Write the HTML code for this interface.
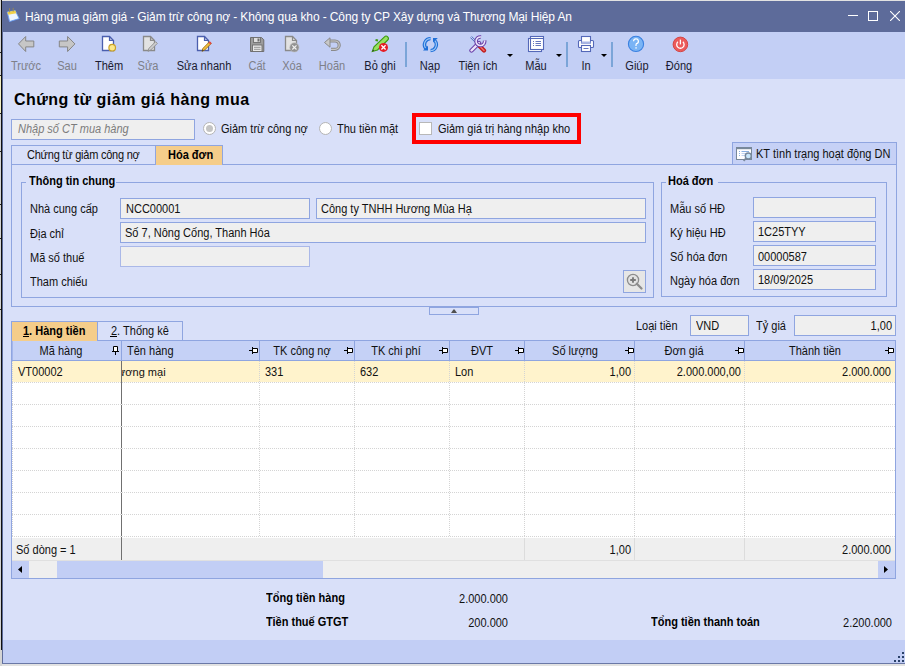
<!DOCTYPE html>
<html><head><meta charset="utf-8">
<style>
*{box-sizing:border-box;margin:0;padding:0}
html,body{width:905px;height:666px;overflow:hidden;background:#e2e2e2;font-family:"Liberation Sans",sans-serif;font-size:11px;color:#111}
.a{position:absolute}
.t{position:absolute;white-space:nowrap}
</style></head><body>

<div class="a" style="left:0px;top:0px;width:2px;height:666px;background:#d4d4d4;"></div>
<div class="a" style="left:1px;top:0px;width:1px;height:650px;background:#111;"></div>
<div class="a" style="left:0px;top:75px;width:1px;height:38px;background:#f4f0c4;"></div>
<div class="a" style="left:0px;top:52px;width:1px;height:1px;background:#222;"></div>
<div class="a" style="left:0px;top:75px;width:1px;height:1px;background:#222;"></div>
<div class="a" style="left:0px;top:113px;width:1px;height:1px;background:#222;"></div>
<div class="a" style="left:0px;top:151px;width:1px;height:1px;background:#222;"></div>
<div class="a" style="left:0px;top:204px;width:1px;height:1px;background:#222;"></div>
<div class="a" style="left:0px;top:238px;width:1px;height:1px;background:#222;"></div>
<div class="a" style="left:0px;top:274px;width:1px;height:1px;background:#222;"></div>
<div class="a" style="left:0px;top:309px;width:1px;height:1px;background:#222;"></div>
<div class="a" style="left:2px;top:1px;width:903px;height:663px;background:#d9e0f9;"></div>
<div class="a" style="left:2px;top:1px;width:903px;height:31px;background:#5d6b9a;"></div>
<div class="a" style="left:2px;top:32px;width:1px;height:632px;background:#5d6b9a;"></div>
<div class="a" style="left:3px;top:32px;width:902px;height:47px;background:#c3cff5;"></div>
<div class="a" style="left:3px;top:640px;width:902px;height:23px;background:#c2cef5;"></div>
<div class="a" style="left:2px;top:663px;width:903px;height:1px;background:#6a78a6;"></div>
<svg class="a" style="left:4px;top:6px;" width="18" height="18" viewBox="0 0 18 18"><path d="M2.6 6 L11 4.6 L15.5 13 L5 16 Z" fill="#7c6ff0" opacity="0.55"/><path d="M3.3 5.9 L11.2 4.6 L15.2 12.6 L5.6 15.5 Z" fill="#eef6ff" stroke="#62a0f0" stroke-width="0.8"/><path d="M3.3 5.9 L11.2 4.6 L12.4 7.2 L4.2 8.8 Z" fill="#f2d24a"/><path d="M5.6 2.2 V6.4 M9.2 1.8 V5.6" stroke="#9a8a50" stroke-width="0.9"/></svg>
<div class="t" style="top:10px;font-size:12px;line-height:14px;color:#ffffff;letter-spacing:-0.12px;left:25px;">Hàng mua giảm giá - Giảm trừ công nợ - Không qua kho - Công ty CP Xây dựng và Thương Mại Hiệp An</div>
<div class="a" style="left:848px;top:15px;width:10px;height:1px;background:#fff;"></div>
<div class="a" style="left:868px;top:11px;width:10px;height:10px;border:1px solid #fff;"></div>
<svg class="a" style="left:890px;top:11px;" width="10" height="10" viewBox="0 0 10 10"><path d="M0 0 L10 10 M10 0 L0 10" stroke="#fff" stroke-width="1.1"/></svg>
<div class="t" style="top:59px;font-size:12px;line-height:14px;color:#7e8088;left:-14.5px;width:80px;text-align:center;transform:scaleX(0.92);transform-origin:50% 0;">Trước</div>
<div class="t" style="top:59px;font-size:12px;line-height:14px;color:#7e8088;left:27.0px;width:80px;text-align:center;transform:scaleX(0.92);transform-origin:50% 0;">Sau</div>
<div class="t" style="top:59px;font-size:12px;line-height:14px;color:#1b1b30;left:68.5px;width:80px;text-align:center;transform:scaleX(0.92);transform-origin:50% 0;">Thêm</div>
<div class="t" style="top:59px;font-size:12px;line-height:14px;color:#7e8088;left:108.0px;width:80px;text-align:center;transform:scaleX(0.92);transform-origin:50% 0;">Sửa</div>
<div class="t" style="top:59px;font-size:12px;line-height:14px;color:#1b1b30;left:163.7px;width:80px;text-align:center;transform:scaleX(0.92);transform-origin:50% 0;">Sửa nhanh</div>
<div class="t" style="top:59px;font-size:12px;line-height:14px;color:#7e8088;left:216.5px;width:80px;text-align:center;transform:scaleX(0.92);transform-origin:50% 0;">Cất</div>
<div class="t" style="top:59px;font-size:12px;line-height:14px;color:#7e8088;left:252.0px;width:80px;text-align:center;transform:scaleX(0.92);transform-origin:50% 0;">Xóa</div>
<div class="t" style="top:59px;font-size:12px;line-height:14px;color:#7e8088;left:292.3px;width:80px;text-align:center;transform:scaleX(0.92);transform-origin:50% 0;">Hoãn</div>
<div class="t" style="top:59px;font-size:12px;line-height:14px;color:#1b1b30;left:340.0px;width:80px;text-align:center;transform:scaleX(0.92);transform-origin:50% 0;">Bỏ ghi</div>
<div class="t" style="top:59px;font-size:12px;line-height:14px;color:#1b1b30;left:390.3px;width:80px;text-align:center;transform:scaleX(0.92);transform-origin:50% 0;">Nạp</div>
<div class="t" style="top:59px;font-size:12px;line-height:14px;color:#1b1b30;left:438.3px;width:80px;text-align:center;transform:scaleX(0.92);transform-origin:50% 0;">Tiện ích</div>
<div class="t" style="top:59px;font-size:12px;line-height:14px;color:#1b1b30;left:496.0px;width:80px;text-align:center;transform:scaleX(0.92);transform-origin:50% 0;">Mẫu</div>
<div class="t" style="top:59px;font-size:12px;line-height:14px;color:#1b1b30;left:545.8px;width:80px;text-align:center;transform:scaleX(0.92);transform-origin:50% 0;">In</div>
<div class="t" style="top:59px;font-size:12px;line-height:14px;color:#1b1b30;left:596.5px;width:80px;text-align:center;transform:scaleX(0.92);transform-origin:50% 0;">Giúp</div>
<div class="t" style="top:59px;font-size:12px;line-height:14px;color:#1b1b30;left:639.3px;width:80px;text-align:center;transform:scaleX(0.92);transform-origin:50% 0;">Đóng</div>
<div class="a" style="left:405px;top:42px;width:2px;height:25px;background:#7ba5d8;"></div>
<div class="a" style="left:566px;top:42px;width:2px;height:25px;background:#7ba5d8;"></div>
<div class="a" style="left:611px;top:42px;width:2px;height:25px;background:#7ba5d8;"></div>
<svg class="a" style="left:507px;top:54px;" width="6" height="3" viewBox="0 0 6 3"><path d="M0 0 L6 0 L3 3 Z" fill="#000"/></svg>
<svg class="a" style="left:556px;top:54px;" width="6" height="3" viewBox="0 0 6 3"><path d="M0 0 L6 0 L3 3 Z" fill="#000"/></svg>
<svg class="a" style="left:601px;top:54px;" width="6" height="3" viewBox="0 0 6 3"><path d="M0 0 L6 0 L3 3 Z" fill="#000"/></svg>
<svg class="a" style="left:17px;top:35px;" width="18" height="18" viewBox="0 0 18 18"><path d="M1.5 8.9 L8.7 1.5 V6 H16.8 V11.9 H8.7 V16.5 Z" fill="#c6c6c6" stroke="#858585" stroke-width="1" stroke-linejoin="miter"/></svg>
<svg class="a" style="left:58px;top:35px;" width="18" height="18" viewBox="0 0 18 18"><path d="M16.9 8.9 L9.6 1.5 V6 H1.3 V11.9 H9.6 V16.5 Z" fill="#c6c6c6" stroke="#858585" stroke-width="1" stroke-linejoin="miter"/></svg>
<svg class="a" style="left:100px;top:35px;" width="17" height="17" viewBox="0 0 17 17"><path d="M2.5 1.5 H9.5 L13.5 5.5 V15.5 H2.5 Z" fill="#fff" stroke="#4b5fae" stroke-width="1.3" stroke-linejoin="miter"/><path d="M9.5 1.5 V5.5 H13.5 Z" fill="#4b5fae" opacity="0.35"/><path d="M9.5 1.5 V5.5 H13.5" fill="none" stroke="#4b5fae" stroke-width="1.2"/><circle cx="12.2" cy="12.7" r="3.3" fill="#fbe88a" stroke="#c8a028" stroke-width="1.2"/></svg>
<svg class="a" style="left:141px;top:35px;" width="18" height="17" viewBox="0 0 18 17"><path d="M2.5 1.5 H9.5 L13.5 5.5 V15.5 H2.5 Z" fill="#e2e2e2" stroke="#8a8a8a" stroke-width="1.3" stroke-linejoin="miter"/><path d="M9.5 1.5 V5.5 H13.5 Z" fill="#8a8a8a" opacity="0.35"/><path d="M9.5 1.5 V5.5 H13.5" fill="none" stroke="#8a8a8a" stroke-width="1.2"/><path d="M7 16.3 L8 13.3 L14.6 6.7 L16.3 8.4 L9.7 15 Z" fill="#cfcfcf" stroke="#8a8a8a" stroke-width="0.9"/></svg>
<svg class="a" style="left:195px;top:35px;" width="18" height="17" viewBox="0 0 18 17"><path d="M2.5 1.5 H9.5 L13.5 5.5 V15.5 H2.5 Z" fill="#fff" stroke="#4b5fae" stroke-width="1.3" stroke-linejoin="miter"/><path d="M9.5 1.5 V5.5 H13.5 Z" fill="#4b5fae" opacity="0.35"/><path d="M9.5 1.5 V5.5 H13.5" fill="none" stroke="#4b5fae" stroke-width="1.2"/><path d="M7 16.3 L8 13.3 L14.6 6.7 L16.3 8.4 L9.7 15 Z" fill="#f2c040" stroke="#a07010" stroke-width="0.9"/><path d="M13.6 7.7 L15.3 9.4 L16.6 8.1 L14.9 6.4 Z" fill="#e8404a"/><path d="M7 16.3 L7.6 14.6 L8.7 15.7 Z" fill="#333"/></svg>
<svg class="a" style="left:249px;top:36px;" width="16" height="17" viewBox="0 0 16 17"><path d="M1.5 1.5 H12.5 L14.8 3.8 V15.5 H1.5 Z" fill="#9c9c9c" stroke="#6e6e6e" stroke-width="1"/><rect x="4.5" y="1.5" width="7" height="5" fill="#dedede" stroke="#6e6e6e" stroke-width="0.9"/><rect x="8.5" y="2.5" width="2" height="3" fill="#6e6e6e"/><rect x="3.5" y="9" width="9.5" height="6.5" fill="#e8e8e8" stroke="#6e6e6e" stroke-width="0.9"/><path d="M5 11.3 H11.5 M5 13.3 H11.5" stroke="#8a8a8a" stroke-width="0.9"/></svg>
<svg class="a" style="left:283px;top:35px;" width="18" height="18" viewBox="0 0 18 18"><path d="M2.5 1.5 H9.5 L13.5 5.5 V15.5 H2.5 Z" fill="#e2e2e2" stroke="#8a8a8a" stroke-width="1.3"/><path d="M9.5 1.5 V5.5 H13.5" fill="none" stroke="#8a8a8a" stroke-width="1.2"/><circle cx="11.4" cy="12.4" r="4.6" fill="#929292" stroke="#bdbdbd" stroke-width="0.6"/><path d="M9.3 10.3 L13.5 14.5 M13.5 10.3 L9.3 14.5" stroke="#f0f0f0" stroke-width="1.2"/></svg>
<svg class="a" style="left:323px;top:37px;" width="18" height="15" viewBox="0 0 18 15"><path d="M6 4 H12 A4.2 4.2 0 0 1 12 12.4 H8" fill="none" stroke="#8a8a8a" stroke-width="3.2"/><path d="M6 4 H12 A4.2 4.2 0 0 1 12 12.4 H8" fill="none" stroke="#c8c8c8" stroke-width="1.2"/><path d="M1.5 5.5 L7 0.8 V10.2 Z" fill="#c8c8c8" stroke="#8a8a8a" stroke-width="1" stroke-linejoin="miter"/></svg>
<svg class="a" style="left:369px;top:33px;" width="22" height="22" viewBox="0 0 22 22"><path d="M3.3 18.5 L5 13.8 L15.5 3.8 A2.3 2.3 0 0 1 18.8 7 L8.5 17 Z" fill="#98e060" stroke="#3c9a10" stroke-width="1.1"/><path d="M9 7.5 L6.5 7" stroke="#3c9a10" stroke-width="2"/><path d="M3.3 18.5 L4 16.6 L5.2 17.8 Z" fill="#333"/><circle cx="14.5" cy="14.4" r="4.5" fill="#e61c24"/><path d="M12.4 12.3 L16.6 16.5 M16.6 12.3 L12.4 16.5" stroke="#fff" stroke-width="1.3"/></svg>
<svg class="a" style="left:421px;top:36px;" width="18" height="17" viewBox="0 0 18 17"><path d="M9.6 2.6 A6 6 0 0 0 5 12.6" fill="none" stroke="#1f6fd8" stroke-width="3.4"/><path d="M13.8 4.6 A6 6 0 0 1 9.6 14.6" fill="none" stroke="#1f6fd8" stroke-width="3.4"/><path d="M9.6 2.6 A6 6 0 0 0 5 12.6" fill="none" stroke="#9cc6f6" stroke-width="1.2"/><path d="M13.8 4.6 A6 6 0 0 1 9.6 14.6" fill="none" stroke="#9cc6f6" stroke-width="1.2"/><path d="M2 14.6 L7 14.6 L7 9.8 Z" fill="#1f6fd8"/><path d="M12 2 L16.8 2 L12 6.6 Z" fill="#1f6fd8"/></svg>
<svg class="a" style="left:469px;top:35px;" width="18" height="18" viewBox="0 0 18 18"><path d="M2 2 L7.5 7.5" stroke="#5070c0" stroke-width="2.2"/><path d="M2 2 L7.5 7.5" stroke="#e6ecff" stroke-width="0.8"/><path d="M10.5 11 L15 15.5" stroke="#c01c1c" stroke-width="4.2" stroke-linecap="round"/><path d="M10.5 11 L15 15.5" stroke="#f06a6a" stroke-width="1.6" stroke-linecap="round"/><path d="M2.5 15.5 L10 8" stroke="#6a40a8" stroke-width="4.4" stroke-linecap="round"/><path d="M2.5 15.5 L10 8" stroke="#ece4fa" stroke-width="2.4" stroke-linecap="round"/><path d="M15.6 5.5 A4.3 4.3 0 1 1 12 2" fill="none" stroke="#6a40a8" stroke-width="3.6"/><path d="M15.6 5.5 A4.3 4.3 0 1 1 12 2" fill="none" stroke="#ece4fa" stroke-width="1.6"/></svg>
<svg class="a" style="left:527px;top:35px;" width="18" height="18" viewBox="0 0 18 18"><rect x="1.5" y="3.5" width="13" height="13" fill="#fff" stroke="#5468b8" stroke-width="1.1"/><rect x="3.5" y="1.5" width="13" height="13" fill="#fff" stroke="#5468b8" stroke-width="1.1"/><path d="M3.5 3.5 H16.5" stroke="#5468b8" stroke-width="1"/><path d="M6 6.5 H7 M6 8.5 H7 M6 10.5 H7 M8.5 6.5 H14 M8.5 8.5 H14 M8.5 10.5 H14" stroke="#5468b8" stroke-width="0.9"/></svg>
<svg class="a" style="left:577px;top:35px;" width="18" height="18" viewBox="0 0 18 18"><rect x="1.5" y="5.5" width="15" height="7" rx="1" fill="#fff" stroke="#5468b8" stroke-width="1.1"/><rect x="4.5" y="1.5" width="9" height="6.5" fill="#fff" stroke="#5468b8" stroke-width="1.1"/><rect x="4.5" y="6.5" width="9" height="2" fill="#a9b6e4"/><rect x="4.5" y="10.5" width="9" height="6" fill="#fff" stroke="#5468b8" stroke-width="1.1"/><path d="M6.5 13.5 H11.5" stroke="#5468b8" stroke-width="0.9"/></svg>
<svg class="a" style="left:627px;top:35px;" width="18" height="18" viewBox="0 0 18 18"><circle cx="9" cy="8.9" r="7.6" fill="#7ab4f5" stroke="#3a80e0" stroke-width="1.1"/><path d="M6.6 6.3 A2.4 2.4 0 1 1 9.6 8.6 Q9 9 9 10.2 V11" fill="none" stroke="#fff" stroke-width="1.2"/><rect x="8.4" y="12.2" width="1.3" height="1.4" fill="#fff"/></svg>
<svg class="a" style="left:672px;top:36px;" width="17" height="17" viewBox="0 0 17 17"><circle cx="8.4" cy="8.4" r="7.3" fill="#ec5a5a" stroke="#d24646" stroke-width="1"/><path d="M5.9 5.8 A3.7 3.7 0 1 0 10.9 5.8" fill="none" stroke="#fff" stroke-width="1.3"/><path d="M8.4 3.6 V8.4" stroke="#fff" stroke-width="1.3"/></svg>
<div class="t" style="top:91px;font-size:16px;line-height:18px;font-weight:700;color:#000;letter-spacing:0.48px;left:14px;">Chứng từ giảm giá hàng mua</div>
<div class="a" style="left:11px;top:119px;width:184px;height:21px;background:#efefef;border:1px solid #8fa5e0;"></div>
<div class="t" style="top:123px;font-size:12px;line-height:13px;transform:scaleX(0.917);transform-origin:0 0;color:#7c7c7c;left:18px;font-style:italic;">Nhập số CT mua hàng</div>
<svg class="a" style="left:203px;top:122px;" width="13" height="13" viewBox="0 0 13 13"><circle cx="6.5" cy="6.5" r="6" fill="#fff" stroke="#b4b4b4" stroke-width="1"/><circle cx="6.5" cy="6.5" r="3.5" fill="#c4c4c4"/></svg>
<div class="t" style="top:123px;font-size:12px;line-height:13px;transform:scaleX(0.917);transform-origin:0 0;left:221px;">Giảm trừ công nợ</div>
<svg class="a" style="left:319px;top:122px;" width="13" height="13" viewBox="0 0 13 13"><circle cx="6.5" cy="6.5" r="6" fill="#fff" stroke="#b4b4b4" stroke-width="1"/></svg>
<div class="t" style="top:123px;font-size:12px;line-height:13px;transform:scaleX(0.917);transform-origin:0 0;left:337px;">Thu tiền mặt</div>
<div class="a" style="left:412px;top:113px;width:169px;height:31px;border:4px solid #ff0000;"></div>
<div class="a" style="left:419px;top:122px;width:13px;height:13px;background:#fff;border:1px solid #b8b8b8;"></div>
<div class="t" style="top:123px;font-size:12px;line-height:13px;transform:scaleX(0.917);transform-origin:0 0;left:438px;">Giảm giá trị hàng nhập kho</div>
<div class="a" style="left:732px;top:142px;width:165px;height:23px;background:#c6d1f6;border:1px solid #8fa5e0;"></div>
<svg class="a" style="left:735px;top:146px;" width="18" height="17" viewBox="0 0 18 17"><rect x="1.5" y="1.5" width="15" height="12" fill="#fff" stroke="#78889a" stroke-width="1"/><rect x="1" y="1" width="16" height="2.2" fill="#78889a"/><path d="M4.5 5 V11" stroke="#8ab0e0" stroke-width="1" stroke-dasharray="1 1"/><path d="M6.5 5.5 H14" stroke="#8ab0e0" stroke-width="1"/><path d="M6.5 7.5 H11 M6.5 9.5 H10" stroke="#c0d4f0" stroke-width="1"/><circle cx="13.3" cy="10" r="3" fill="#c8e6fa" stroke="#78889a" stroke-width="1.4"/><path d="M11.2 12.2 L8.6 14.8" stroke="#78889a" stroke-width="1.8"/></svg>
<div class="t" style="top:148px;font-size:12px;line-height:13px;transform:scaleX(0.917);transform-origin:0 0;left:756px;">KT tình trạng hoạt động DN</div>
<div class="a" style="left:11px;top:164px;width:886px;height:143px;border:1px solid #8fa5e0;"></div>
<div class="a" style="left:11px;top:145px;width:145px;height:20px;border:1px solid #8fa5e0;"></div>
<div class="a" style="left:155px;top:145px;width:68px;height:20px;background:#f5cd8a;border:1px solid #8fa5e0;border-bottom:none;"></div>
<div class="t" style="top:149px;font-size:12px;line-height:13px;transform:scaleX(0.917);transform-origin:0 0;letter-spacing:-0.25px;left:27px;">Chứng từ giảm công nợ</div>
<div class="t" style="top:149px;font-size:12px;line-height:13px;transform:scaleX(0.917);transform-origin:0 0;font-weight:700;color:#000;left:167.5px;">Hóa đơn</div>
<div class="a" style="left:21px;top:182px;width:633px;height:116px;border:1px solid #8fa5e0;"></div>
<div class="a" style="left:26px;top:176px;width:90px;height:10px;background:#d9e0f9;"></div>
<div class="t" style="top:175px;font-size:12px;line-height:13px;transform:scaleX(0.917);transform-origin:0 0;font-weight:700;color:#000;left:28.5px;">Thông tin chung</div>
<div class="t" style="top:203px;font-size:12px;line-height:13px;transform:scaleX(0.917);transform-origin:0 0;left:30px;">Nhà cung cấp</div>
<div class="t" style="top:228px;font-size:12px;line-height:13px;transform:scaleX(0.917);transform-origin:0 0;left:30px;">Địa chỉ</div>
<div class="t" style="top:252px;font-size:12px;line-height:13px;transform:scaleX(0.917);transform-origin:0 0;left:30px;">Mã số thuế</div>
<div class="t" style="top:276px;font-size:12px;line-height:13px;transform:scaleX(0.917);transform-origin:0 0;left:30px;">Tham chiếu</div>
<div class="a" style="left:120px;top:198px;width:190px;height:21px;background:#efefef;border:1px solid #8fa5e0;"></div>
<div class="a" style="left:316px;top:198px;width:330px;height:21px;background:#efefef;border:1px solid #8fa5e0;"></div>
<div class="a" style="left:120px;top:222px;width:526px;height:21px;background:#efefef;border:1px solid #8fa5e0;"></div>
<div class="a" style="left:120px;top:246px;width:190px;height:21px;background:#efefef;border:1px solid #aab8e8;"></div>
<div class="t" style="top:203px;font-size:12px;line-height:13px;transform:scaleX(0.917);transform-origin:0 0;left:126px;">NCC00001</div>
<div class="t" style="top:203px;font-size:12px;line-height:13px;transform:scaleX(0.917);transform-origin:0 0;left:321px;">Công ty TNHH Hương Mùa Hạ</div>
<div class="t" style="top:227px;font-size:12px;line-height:13px;transform:scaleX(0.917);transform-origin:0 0;left:125px;">Số 7, Nông Cống, Thanh Hóa</div>
<div class="a" style="left:623px;top:270px;width:23px;height:23px;background:#e6e6e6;border:1px solid #8fa5e0;"></div>
<svg class="a" style="left:626px;top:273px;" width="18" height="18" viewBox="0 0 18 18"><circle cx="7" cy="7" r="5.6" fill="#e2e2e2" stroke="#8c8c8c" stroke-width="1.3"/><path d="M4.2 7 H9.8 M7 4.2 V9.8" stroke="#7a7a7a" stroke-width="1.9"/><path d="M10.8 10.8 L15.5 15.5" stroke="#8c8c8c" stroke-width="2.3" stroke-linecap="round"/></svg>
<div class="a" style="left:661px;top:182px;width:226px;height:115px;border:1px solid #8fa5e0;"></div>
<div class="a" style="left:666px;top:176px;width:52px;height:10px;background:#d9e0f9;"></div>
<div class="t" style="top:175px;font-size:12px;line-height:13px;transform:scaleX(0.917);transform-origin:0 0;font-weight:700;color:#000;left:668px;">Hoá đơn</div>
<div class="t" style="top:203px;font-size:12px;line-height:13px;transform:scaleX(0.917);transform-origin:0 0;left:670px;">Mẫu số HĐ</div>
<div class="t" style="top:227px;font-size:12px;line-height:13px;transform:scaleX(0.917);transform-origin:0 0;left:670px;">Ký hiệu HĐ</div>
<div class="t" style="top:251px;font-size:12px;line-height:13px;transform:scaleX(0.917);transform-origin:0 0;left:670px;">Số hóa đơn</div>
<div class="t" style="top:275px;font-size:12px;line-height:13px;transform:scaleX(0.917);transform-origin:0 0;left:670px;">Ngày hóa đơn</div>
<div class="a" style="left:753px;top:197px;width:123px;height:21px;background:#efefef;border:1px solid #8fa5e0;"></div>
<div class="a" style="left:753px;top:221px;width:123px;height:21px;background:#efefef;border:1px solid #8fa5e0;"></div>
<div class="a" style="left:753px;top:245px;width:123px;height:21px;background:#efefef;border:1px solid #8fa5e0;"></div>
<div class="a" style="left:753px;top:269px;width:123px;height:21px;background:#efefef;border:1px solid #8fa5e0;"></div>
<div class="t" style="top:226px;font-size:12px;line-height:13px;transform:scaleX(0.917);transform-origin:0 0;left:758px;">1C25TYY</div>
<div class="t" style="top:251px;font-size:12px;line-height:13px;transform:scaleX(0.917);transform-origin:0 0;left:758px;">00000587</div>
<div class="t" style="top:274px;font-size:12px;line-height:13px;transform:scaleX(0.917);transform-origin:0 0;left:758px;">18/09/2025</div>
<div class="a" style="left:429px;top:306px;width:50px;height:9px;border:1px solid #8fa5e0;"></div>
<div class="a" style="left:429px;top:307px;width:50px;height:1px;background:#8fa5e0;"></div>
<svg class="a" style="left:451px;top:309px;" width="6" height="4" viewBox="0 0 6 4"><path d="M0 4 L6 4 L3.6 0.6 L2.4 0.6 Z" fill="#505050"/></svg>
<div class="t" style="top:320px;font-size:12px;line-height:13px;transform:scaleX(0.917);transform-origin:0 0;left:636px;">Loại tiền</div>
<div class="a" style="left:690px;top:315px;width:59px;height:21px;background:#efefef;border:1px solid #8fa5e0;"></div>
<div class="t" style="top:320px;font-size:12px;line-height:13px;transform:scaleX(0.917);transform-origin:0 0;left:696px;">VND</div>
<div class="t" style="top:320px;font-size:12px;line-height:13px;transform:scaleX(0.917);transform-origin:0 0;left:756px;">Tỷ giá</div>
<div class="a" style="left:794px;top:315px;width:102px;height:21px;background:#efefef;border:1px solid #8fa5e0;"></div>
<div class="t" style="top:320px;font-size:12px;line-height:13px;transform:scaleX(0.917);transform-origin:100% 0;left:592px;width:300px;text-align:right;">1,00</div>
<div class="a" style="left:11px;top:340px;width:885px;height:239px;background:#fff;border:1px solid #8fa5e0;"></div>
<div class="a" style="left:12px;top:341px;width:883px;height:19px;background:#c5d1f6;"></div>
<div class="a" style="left:97px;top:321px;width:86px;height:20px;border:1px solid #8fa5e0;"></div>
<div class="a" style="left:11px;top:321px;width:87px;height:20px;background:#f5cd8a;border:1px solid #8fa5e0;border-bottom:none;"></div>
<div class="t" style="top:325px;font-size:12px;line-height:13px;transform:scaleX(0.917);transform-origin:0 0;font-weight:700;color:#000;left:23px;">1. Hàng tiền</div>
<div class="a" style="left:23px;top:336px;width:6px;height:1px;background:#000;"></div>
<div class="t" style="top:325px;font-size:12px;line-height:13px;transform:scaleX(0.917);transform-origin:0 0;left:110.5px;">2. Thống kê</div>
<div class="a" style="left:110px;top:336px;width:7px;height:1px;background:#000;"></div>
<div class="a" style="left:12px;top:360px;width:883px;height:1px;background:#8fa5e0;"></div>
<div class="a" style="left:121px;top:341px;width:1px;height:19px;background:#8fa5e0;"></div>
<div class="a" style="left:259px;top:341px;width:1px;height:19px;background:#8fa5e0;"></div>
<div class="a" style="left:354px;top:341px;width:1px;height:19px;background:#8fa5e0;"></div>
<div class="a" style="left:449px;top:341px;width:1px;height:19px;background:#8fa5e0;"></div>
<div class="a" style="left:524px;top:341px;width:1px;height:19px;background:#8fa5e0;"></div>
<div class="a" style="left:634px;top:341px;width:1px;height:19px;background:#8fa5e0;"></div>
<div class="a" style="left:744px;top:341px;width:1px;height:19px;background:#8fa5e0;"></div>
<div class="a" style="left:12px;top:341px;width:1px;height:19px;background:#a4b6ec;"></div>
<div class="a" style="left:12px;top:361px;width:883px;height:21px;background:#fff3cc;"></div>
<div class="a" style="left:12px;top:382px;width:883px;height:1px;background:repeating-linear-gradient(90deg,#d4d4d4 0 1px,transparent 1px 2px)"></div>
<div class="a" style="left:12px;top:404px;width:883px;height:1px;background:repeating-linear-gradient(90deg,#d4d4d4 0 1px,transparent 1px 2px)"></div>
<div class="a" style="left:12px;top:426px;width:883px;height:1px;background:repeating-linear-gradient(90deg,#d4d4d4 0 1px,transparent 1px 2px)"></div>
<div class="a" style="left:12px;top:448px;width:883px;height:1px;background:repeating-linear-gradient(90deg,#d4d4d4 0 1px,transparent 1px 2px)"></div>
<div class="a" style="left:12px;top:470px;width:883px;height:1px;background:repeating-linear-gradient(90deg,#d4d4d4 0 1px,transparent 1px 2px)"></div>
<div class="a" style="left:12px;top:492px;width:883px;height:1px;background:repeating-linear-gradient(90deg,#d4d4d4 0 1px,transparent 1px 2px)"></div>
<div class="a" style="left:12px;top:514px;width:883px;height:1px;background:repeating-linear-gradient(90deg,#d4d4d4 0 1px,transparent 1px 2px)"></div>
<div class="a" style="left:12px;top:536px;width:883px;height:1px;background:repeating-linear-gradient(90deg,#d4d4d4 0 1px,transparent 1px 2px)"></div>
<div class="a" style="left:12px;top:361px;width:1px;height:176px;background:repeating-linear-gradient(180deg,#d4d4d4 0 1px,transparent 1px 2px)"></div>
<div class="a" style="left:259px;top:361px;width:1px;height:176px;background:repeating-linear-gradient(180deg,#d4d4d4 0 1px,transparent 1px 2px)"></div>
<div class="a" style="left:354px;top:361px;width:1px;height:176px;background:repeating-linear-gradient(180deg,#d4d4d4 0 1px,transparent 1px 2px)"></div>
<div class="a" style="left:449px;top:361px;width:1px;height:176px;background:repeating-linear-gradient(180deg,#d4d4d4 0 1px,transparent 1px 2px)"></div>
<div class="a" style="left:524px;top:361px;width:1px;height:176px;background:repeating-linear-gradient(180deg,#d4d4d4 0 1px,transparent 1px 2px)"></div>
<div class="a" style="left:634px;top:361px;width:1px;height:176px;background:repeating-linear-gradient(180deg,#d4d4d4 0 1px,transparent 1px 2px)"></div>
<div class="a" style="left:744px;top:361px;width:1px;height:176px;background:repeating-linear-gradient(180deg,#d4d4d4 0 1px,transparent 1px 2px)"></div>
<div class="a" style="left:12px;top:538px;width:883px;height:23px;background:#efefef;"></div>
<div class="a" style="left:12px;top:560px;width:883px;height:1px;background:#e0e0e0;"></div>
<div class="a" style="left:121px;top:361px;width:1px;height:199px;background:#707070;"></div>
<div class="a" style="left:121px;top:404px;width:1px;height:1px;background:#e8e8e8;"></div>
<div class="a" style="left:121px;top:426px;width:1px;height:1px;background:#e8e8e8;"></div>
<div class="a" style="left:121px;top:448px;width:1px;height:1px;background:#e8e8e8;"></div>
<div class="a" style="left:121px;top:470px;width:1px;height:1px;background:#e8e8e8;"></div>
<div class="a" style="left:121px;top:492px;width:1px;height:1px;background:#e8e8e8;"></div>
<div class="a" style="left:121px;top:514px;width:1px;height:1px;background:#e8e8e8;"></div>
<div class="a" style="left:121px;top:536px;width:1px;height:1px;background:#e8e8e8;"></div>
<div class="a" style="left:524px;top:538px;width:1px;height:22px;background:#dcdcdc;"></div>
<div class="a" style="left:634px;top:538px;width:1px;height:22px;background:#dcdcdc;"></div>
<div class="a" style="left:744px;top:538px;width:1px;height:22px;background:#dcdcdc;"></div>
<div class="a" style="left:12px;top:561px;width:883px;height:17px;background:#efefef;"></div>
<div class="a" style="left:12px;top:561px;width:17px;height:17px;background:#c2cef5;"></div>
<div class="a" style="left:57px;top:561px;width:266px;height:17px;background:#c2cef5;"></div>
<div class="a" style="left:878px;top:561px;width:17px;height:17px;background:#c2cef5;"></div>
<svg class="a" style="left:18px;top:566px;" width="4" height="7" viewBox="0 0 4 7"><path d="M4 0 L0 3.5 L4 7 Z" fill="#000"/></svg>
<svg class="a" style="left:884px;top:566px;" width="4" height="7" viewBox="0 0 4 7"><path d="M0 0 L4 3.5 L0 7 Z" fill="#000"/></svg>
<div class="t" style="top:345px;font-size:12px;line-height:13px;transform:scaleX(0.917);transform-origin:50% 0;left:11.0px;width:100px;text-align:center;">Mã hàng</div>
<div class="t" style="top:345px;font-size:12px;line-height:13px;transform:scaleX(0.917);transform-origin:0 0;left:126.5px;">Tên hàng</div>
<div class="t" style="top:345px;font-size:12px;line-height:13px;transform:scaleX(0.917);transform-origin:50% 0;left:256.5px;width:90px;text-align:center;">TK công nợ</div>
<div class="t" style="top:345px;font-size:12px;line-height:13px;transform:scaleX(0.917);transform-origin:50% 0;left:351.0px;width:90px;text-align:center;">TK chi phí</div>
<div class="t" style="top:345px;font-size:12px;line-height:13px;transform:scaleX(0.917);transform-origin:50% 0;left:447.0px;width:70px;text-align:center;">ĐVT</div>
<div class="t" style="top:345px;font-size:12px;line-height:13px;transform:scaleX(0.917);transform-origin:50% 0;left:529.5px;width:90px;text-align:center;">Số lượng</div>
<div class="t" style="top:345px;font-size:12px;line-height:13px;transform:scaleX(0.917);transform-origin:50% 0;left:639.0px;width:90px;text-align:center;">Đơn giá</div>
<div class="t" style="top:345px;font-size:12px;line-height:13px;transform:scaleX(0.917);transform-origin:50% 0;left:754.5px;width:120px;text-align:center;">Thành tiền</div>
<svg class="a" style="left:112px;top:346px;" width="7" height="9" viewBox="0 0 7 9"><path d="M1.5 0.5 H5.5 V5.5 H1.5 Z" fill="#fff" stroke="#000" stroke-width="1"/><path d="M0 5.5 H7 M3.5 5.5 V9" stroke="#000" stroke-width="1"/></svg>
<svg class="a" style="left:249px;top:347px;" width="9" height="7" viewBox="0 0 9 7"><path d="M3.5 1.5 H8.5 V5.5 H3.5 Z" fill="#fff" stroke="#000" stroke-width="1"/><path d="M3.5 0 V7 M0 3.5 H3.5" stroke="#000" stroke-width="1"/></svg>
<svg class="a" style="left:344px;top:347px;" width="9" height="7" viewBox="0 0 9 7"><path d="M3.5 1.5 H8.5 V5.5 H3.5 Z" fill="#fff" stroke="#000" stroke-width="1"/><path d="M3.5 0 V7 M0 3.5 H3.5" stroke="#000" stroke-width="1"/></svg>
<svg class="a" style="left:439px;top:347px;" width="9" height="7" viewBox="0 0 9 7"><path d="M3.5 1.5 H8.5 V5.5 H3.5 Z" fill="#fff" stroke="#000" stroke-width="1"/><path d="M3.5 0 V7 M0 3.5 H3.5" stroke="#000" stroke-width="1"/></svg>
<svg class="a" style="left:515px;top:347px;" width="9" height="7" viewBox="0 0 9 7"><path d="M3.5 1.5 H8.5 V5.5 H3.5 Z" fill="#fff" stroke="#000" stroke-width="1"/><path d="M3.5 0 V7 M0 3.5 H3.5" stroke="#000" stroke-width="1"/></svg>
<svg class="a" style="left:625px;top:347px;" width="9" height="7" viewBox="0 0 9 7"><path d="M3.5 1.5 H8.5 V5.5 H3.5 Z" fill="#fff" stroke="#000" stroke-width="1"/><path d="M3.5 0 V7 M0 3.5 H3.5" stroke="#000" stroke-width="1"/></svg>
<svg class="a" style="left:735px;top:347px;" width="9" height="7" viewBox="0 0 9 7"><path d="M3.5 1.5 H8.5 V5.5 H3.5 Z" fill="#fff" stroke="#000" stroke-width="1"/><path d="M3.5 0 V7 M0 3.5 H3.5" stroke="#000" stroke-width="1"/></svg>
<svg class="a" style="left:885px;top:347px;" width="9" height="7" viewBox="0 0 9 7"><path d="M3.5 1.5 H8.5 V5.5 H3.5 Z" fill="#fff" stroke="#000" stroke-width="1"/><path d="M3.5 0 V7 M0 3.5 H3.5" stroke="#000" stroke-width="1"/></svg>
<div class="t" style="top:366px;font-size:12px;line-height:13px;transform:scaleX(0.917);transform-origin:0 0;left:18px;">VT00002</div>
<div class="a" style="left:122px;top:361px;width:137px;height:21px;overflow:hidden"><div class="t" style="left:-4px;top:5px;font-size:11px;line-height:13px">ương mại</div></div>
<div class="t" style="top:366px;font-size:12px;line-height:13px;transform:scaleX(0.917);transform-origin:0 0;left:265px;">331</div>
<div class="t" style="top:366px;font-size:12px;line-height:13px;transform:scaleX(0.917);transform-origin:0 0;left:360px;">632</div>
<div class="t" style="top:366px;font-size:12px;line-height:13px;transform:scaleX(0.917);transform-origin:0 0;left:455px;">Lon</div>
<div class="t" style="top:366px;font-size:12px;line-height:13px;transform:scaleX(0.917);transform-origin:100% 0;left:331px;width:300px;text-align:right;">1,00</div>
<div class="t" style="top:366px;font-size:12px;line-height:13px;transform:scaleX(0.917);transform-origin:100% 0;left:441px;width:300px;text-align:right;">2.000.000,00</div>
<div class="t" style="top:366px;font-size:12px;line-height:13px;transform:scaleX(0.917);transform-origin:100% 0;left:591px;width:300px;text-align:right;">2.000.000</div>
<div class="t" style="top:544px;font-size:12px;line-height:13px;transform:scaleX(0.917);transform-origin:0 0;left:16px;">Số dòng = 1</div>
<div class="t" style="top:544px;font-size:12px;line-height:13px;transform:scaleX(0.917);transform-origin:100% 0;left:331px;width:300px;text-align:right;">1,00</div>
<div class="t" style="top:544px;font-size:12px;line-height:13px;transform:scaleX(0.917);transform-origin:100% 0;left:591px;width:300px;text-align:right;">2.000.000</div>
<div class="t" style="top:592px;font-size:12px;line-height:13px;transform:scaleX(0.917);transform-origin:0 0;font-weight:700;color:#000;left:266px;">Tổng tiền hàng</div>
<div class="t" style="top:593px;font-size:12px;line-height:13px;transform:scaleX(0.917);transform-origin:100% 0;left:207.5px;width:300px;text-align:right;">2.000.000</div>
<div class="t" style="top:616px;font-size:12px;line-height:13px;transform:scaleX(0.917);transform-origin:0 0;font-weight:700;color:#000;left:266px;">Tiền thuế GTGT</div>
<div class="t" style="top:617px;font-size:12px;line-height:13px;transform:scaleX(0.917);transform-origin:100% 0;left:207.5px;width:300px;text-align:right;">200.000</div>
<div class="t" style="top:616px;font-size:12px;line-height:13px;transform:scaleX(0.917);transform-origin:0 0;font-weight:700;color:#000;left:650.5px;">Tổng tiền thanh toán</div>
<div class="t" style="top:617px;font-size:12px;line-height:13px;transform:scaleX(0.917);transform-origin:100% 0;left:592px;width:300px;text-align:right;">2.200.000</div>
<div class="a" style="left:902px;top:652px;width:2px;height:2px;background:#2a416a;"></div>
<div class="a" style="left:898px;top:656px;width:2px;height:2px;background:#2a416a;"></div>
<div class="a" style="left:902px;top:656px;width:2px;height:2px;background:#2a416a;"></div>
<div class="a" style="left:894px;top:660px;width:2px;height:2px;background:#2a416a;"></div>
<div class="a" style="left:898px;top:660px;width:2px;height:2px;background:#2a416a;"></div>
<div class="a" style="left:902px;top:660px;width:2px;height:2px;background:#2a416a;"></div>
</body></html>
